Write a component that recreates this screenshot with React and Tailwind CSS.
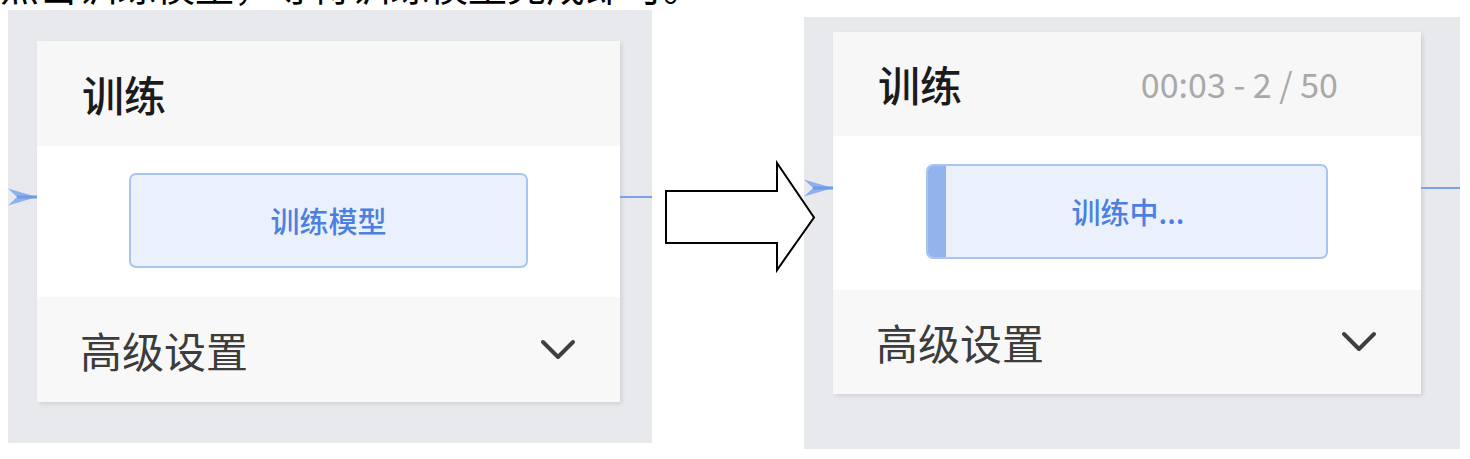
import React from "react";

const FONT = { fontFamily: '"Noto Sans CJK SC", "Noto Sans", sans-serif' };

function InArrow() {
  return (
    <svg width="29" height="20" viewBox="0 0 29 20" className="mt-[146px] block">
      <path d="M0 1.5 L29 10 L0 18.5 L9 10 Z" fill="#8db0ee" />
      <path d="M9 10 L29 10" stroke="#6e9be8" strokeWidth="3" />
    </svg>
  );
}

function Chevron() {
  return (
    <svg width="36" height="22" viewBox="0 0 36 22" className="block">
      <path d="M3 3 L18 18 L33 3" fill="none" stroke="#3f3f3f" strokeWidth="4" strokeLinecap="round" strokeLinejoin="round" />
    </svg>
  );
}

function Card({ width, headerH, midH, bottomH, midPt, training }) {
  return (
    <div className={`${width} flex flex-col shadow-[2px_2px_4px_rgba(0,0,0,0.10)]`}>
      <div className={`${headerH} bg-[#f7f7f7] flex items-center justify-between pl-[45px] pr-[83px]`}>
        <span className="text-[42px] leading-none font-medium text-[#1b1b1b]">训练</span>
        {training && (
          <span className="text-[34px] leading-none text-[#a9a9a9]">00:03 - 2 / 50</span>
        )}
      </div>
      <div className={`${midH} ${midPt} bg-white flex justify-center`}>
        {training ? (
          <div className="relative w-[402px] h-[95px] rounded-[7px] border-2 border-[#a8c5f1] bg-[#eaf1fc] flex items-center justify-center overflow-hidden">
            <div className="absolute left-0 top-0 bottom-0 w-[18px] bg-[#92b3ec]" />
            <span className="text-[29px] leading-none font-medium text-[#4d7fe0] ml-[2px]">训练中...</span>
          </div>
        ) : (
          <div className="w-[399px] h-[95px] rounded-[7px] border-2 border-[#a8c5f1] bg-[#eaf1fc] flex items-center justify-center">
            <span className="text-[29px] leading-none font-medium text-[#4d7fe0]">训练模型</span>
          </div>
        )}
      </div>
      <div className={`${bottomH} bg-[#f8f8f8] flex items-center justify-between pl-[43px] pr-[44px]`}>
        <span className="text-[42px] leading-none text-[#3c3c3c]">高级设置</span>
        <Chevron />
      </div>
    </div>
  );
}

export default function App() {
  return (
    <div className="relative w-[1470px] h-[459px] bg-white overflow-hidden" style={FONT}>
      <div className="h-[10px] overflow-hidden">
        <p className="-mt-[35px] text-[39px] leading-none text-black whitespace-nowrap">点击训练模型，等待训练模型完成即可。</p>
      </div>
      <div className="flex items-start pl-[8px]">
        <div className="w-[644px] h-[433px] bg-[#e8e9ed] pt-[31px] flex items-start">
          <div className="w-[29px]">
            <InArrow />
          </div>
          <Card width="w-[583px]" headerH="h-[105px]" midH="h-[151px]" bottomH="h-[105px]" midPt="pt-[27px]" training={false} />
          <div className="flex-1">
            <div className="mt-[155px] h-[2px] bg-[#79a2ea]" />
          </div>
        </div>
        <div className="w-[152px]" />
        <div className="w-[656px] h-[432px] mt-[7px] bg-[#e8e9ed] pt-[15px] flex items-start">
          <div className="w-[29px]">
            <InArrow />
          </div>
          <Card width="w-[588px]" headerH="h-[104px]" midH="h-[154px]" bottomH="h-[104px]" midPt="pt-[28px]" training={true} />
          <div className="flex-1">
            <div className="mt-[155px] h-[2px] bg-[#79a2ea]" />
          </div>
        </div>
      </div>
      <svg className="absolute left-[660px] top-[158px]" width="162" height="118" viewBox="660 158 162 118">
        <path
          d="M666 191 L777 191 L777 163 L814 217.5 L777 270 L777 243 L666 243 Z"
          fill="white"
          stroke="black"
          strokeWidth="2"
          strokeLinejoin="miter"
        />
      </svg>
    </div>
  );
}
